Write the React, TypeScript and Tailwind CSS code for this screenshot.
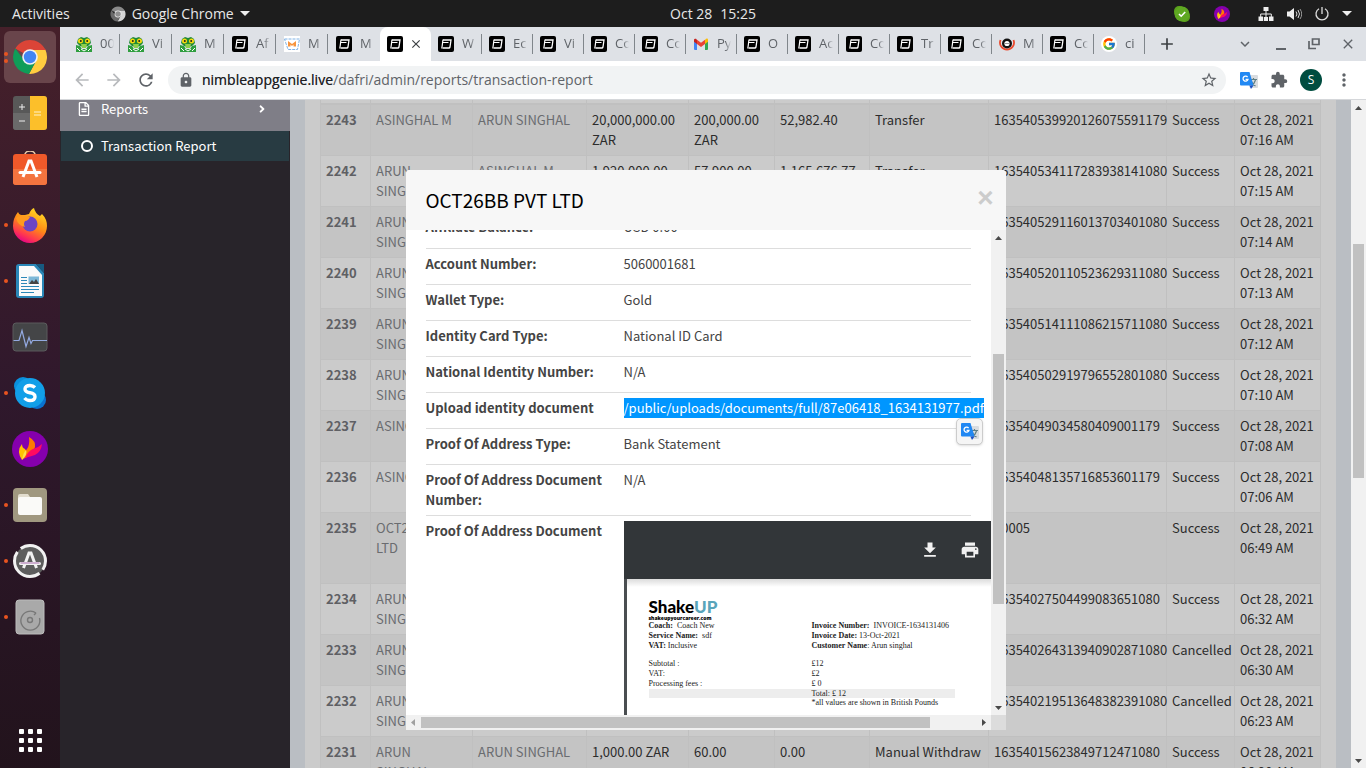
import React from 'react';
import {
  MdAdd, MdArrowBack, MdArrowForward, MdClose, MdExpandMore, MdExtension, MdFileDownload,
  MdLock, MdMoreVert, MdPrint, MdRefresh, MdStarBorder,
} from 'react-icons/md';
import { FaAngleRight, FaRegFileAlt } from 'react-icons/fa';
import { FcGoogle } from 'react-icons/fc';

/* ---------- small icons ---------- */

function FrogIcon() {
  return (
    <svg viewBox="0 0 16 16" className="size-4 shrink-0">
      <path d="M0 9l4 1 2 3 4 0 2-3 4-1v7H0z" fill="#2f9e3f" />
      <path d="M2 3l3-2 3 1 3-1 3 2 1 4-3 3-4 1-4-1-3-3z" fill="#1f8a35" />
      <path d="M5 8h6l-1 4H6z" fill="#8ecf4a" />
      <path d="M1 12l3 3M15 12l-3 3M5 13l3 2 3-2" stroke="#fff" strokeWidth="1" fill="none" />
      <circle cx="4.5" cy="5" r="2.5" fill="#f6d90e" />
      <circle cx="11.5" cy="5" r="2.5" fill="#f6d90e" />
      <circle cx="4.8" cy="5" r="1" fill="#222" />
      <circle cx="11.2" cy="5" r="1" fill="#222" />
    </svg>
  );
}

function DafriIcon() {
  return (
    <svg viewBox="0 0 16 16" className="size-4 shrink-0">
      <rect width="16" height="16" rx="2" fill="#000" />
      <path d="M5 4H13L12 11Q11.800 12 10.800 12H4.500" fill="none" stroke="#fff" strokeWidth="1.300" />
      <path d="M5 3.500L3.800 12.500" fill="none" stroke="#fff" strokeWidth="1.200" />
      <path d="M4.500 6.500H10.500" fill="none" stroke="#fff" strokeWidth="1" />
    </svg>
  );
}

function MoodleIcon() {
  return (
    <svg viewBox="0 0 16 16" className="size-4 shrink-0">
      <rect width="16" height="16" fill="#fff" />
      <path d="M.5 3h15l-2 10.500h-9.500z" fill="#fff" stroke="#7fb2e5" strokeWidth="1" strokeDasharray="3 1" />
      <path d="M4 10.500V5l4 3 4-3v5.500H9.500V8.500L8 10l-1.500-1.500v2z" fill="#f7933c" />
    </svg>
  );
}

function GmailIcon() {
  return (
    <svg viewBox="0 0 16 16" className="size-4 shrink-0">
      <path d="M1 4.500v8.500q0 1 1 1h2V7z" fill="#4285f4" />
      <path d="M15 4.500v8.500q0 1-1 1h-2V7z" fill="#34a853" />
      <path d="M12 3.700V8l3-2.200V4q0-2-2-1.200z" fill="#fbbc04" />
      <path d="M4 3.700l4 3 4-3V8l-4 3-4-3z" fill="#ea4335" />
      <path d="M1 4v1.800L4 8V3.700L3 2.800Q1 2.200 1 4z" fill="#c5221f" />
    </svg>
  );
}

function RingIcon() {
  return (
    <svg viewBox="0 0 16 16" className="size-4 shrink-0">
      <path d="M1.500 4a7 7 0 1 0 13 0" fill="none" stroke="#ea4a2e" strokeWidth="1.800" />
      <circle cx="8" cy="7.500" r="3.800" fill="#fff" stroke="#111" strokeWidth="2.400" />
      <path d="M6 7.500h4" stroke="#999" strokeWidth="1" />
    </svg>
  );
}

function GoogleTabIcon() {
  return (
    <span className="flex size-4 shrink-0 items-center justify-center rounded-full bg-white">
      <FcGoogle className="size-3.5" />
    </span>
  );
}

function TranslateIcon() {
  return (
    <svg viewBox="0 0 20 20" className="size-5 shrink-0">
      <path d="M7 5h12q1 0 1 1v11q0 1-1 1h-7z" fill="#d9dce0" />
      <path d="M12 9.500h7M15.500 8v1.500M17.500 10q-1 3.500-4 5.500M13.500 11.500q1 3 4 4.500" fill="none" stroke="#5f7f84" strokeWidth="1.200" />
      <path d="M3 2h8.500l4 13.500H3q-1 0-1-1V3q0-1 1-1z" fill="#2188f3" />
      <path d="M11.500 15.500h4l-2.500 3.500z" fill="#1a4fc4" />
      <path d="M9.600 7.200A2.500 2.500 0 1 0 10 9.300H7.600" fill="none" stroke="#fff" strokeWidth="1.300" />
    </svg>
  );
}

function FlameIcon({ className }: { className: string }) {
  return (
    <svg viewBox="0 0 36 36" className={className}>
      <circle cx="18" cy="18" r="18" fill="#8500ad" />
      <path d="M10 29Q4 20 10 13q0 4 3 5 4 4-3 11z" fill="#ffc400" />
      <path d="M11 28Q12 21 15 18q3-4 2-12 7 4 6 10-2 8-12 12z" fill="#ff7a00" />
      <path d="M13 27q3-7 8-9 5-1 9-5-1 8-7 11-3 1-10 3z" fill="#ff0a60" />
      <path d="M10 29q1-7 4-10 2 4-4 10z" fill="#ffe04a" />
    </svg>
  );
}

/* ---------- dock icons ---------- */

const dockIcon = 'size-9';

function ChromeIcon({ className = dockIcon, mono = false }: { className?: string; mono?: boolean }) {
  const c = mono ? ['#8a8a8a', '#d5d5d5', '#6a6a6a', '#8f8f8f'] : ['#db4437', '#ffcd40', '#0f9d58', '#4285f4'];
  return (
    <svg viewBox="0 0 36 36" className={className}>
      <path d="M18 18L3.300 9.500A17 17 0 0 1 32.700 9.500L34 11H18z" fill={c[0]} />
      <path d="M18 11h15.500A17 17 0 0 1 17 35l7-13z" fill={c[1]} />
      <path d="M3.300 9.500A17 17 0 0 0 17 35l7-13-12-1z" fill={c[2]} />
      <circle cx="18" cy="18" r="7.800" fill="#f1f1f1" />
      <circle cx="18" cy="18" r="6.200" fill={c[3]} />
    </svg>
  );
}

function CalculatorIcon() {
  return (
    <svg viewBox="0 0 36 36" className={dockIcon}>
      <rect x="1" y="1" width="34" height="34" rx="3" fill="#585858" />
      <path d="M1 18h17v17H4q-3 0-3-3z" fill="#6a6a6a" />
      <path d="M18 1h14q3 0 3 3v28q0 3-3 3H18z" fill="#fcbf2a" />
      <path d="M7 12h6M10 9v6M7 26h6" stroke="#eee" strokeWidth="1" />
      <path d="M22 17h7M22 20h7" stroke="#fff2cc" strokeWidth="1" />
    </svg>
  );
}

function SoftwareIcon() {
  return (
    <svg viewBox="0 0 36 36" className={dockIcon}>
      <path d="M13 5V3q1-3 5-3t5 3v2" fill="none" stroke="#e8c9a8" strokeWidth="1.500" />
      <rect x="1" y="3" width="34" height="31" rx="3" fill="#f0592a" />
      <path d="M1 18h34v13q0 3-3 3H4q-3 0-3-3z" fill="#f4743f" />
      <path d="M11 26l6-16h2l6 16" fill="none" stroke="#fff" strokeWidth="3" />
      <path d="M8 21.500h20" stroke="#fff" strokeWidth="3" strokeLinecap="round" />
    </svg>
  );
}

function FirefoxIcon() {
  return (
    <svg viewBox="0 0 36 36" className={dockIcon}>
      <defs>
        <linearGradient id="fx" x1="0.800" y1="0" x2="0.300" y2="1">
          <stop offset="0" stopColor="#ffe226" />
          <stop offset="0.500" stopColor="#ff8a16" />
          <stop offset="0.800" stopColor="#ff3650" />
          <stop offset="1" stopColor="#e3008a" />
        </linearGradient>
      </defs>
      <path d="M6 5q1 3 3 3h4l4-1q2-5 5-6 1 5 6 8l2-2q5 5 5 12A17 17 0 0 1 1 19Q1 11 6 5z" fill="url(#fx)" />
      <circle cx="18" cy="17" r="7.500" fill="#6b45c4" />
      <path d="M4 11q4-4 8-2l6 1q-2 4-5 4-2 3 0 6-7-1-9-9z" fill="#ff9a1f" />
    </svg>
  );
}

function WriterIcon() {
  return (
    <svg viewBox="0 0 36 36" className={dockIcon}>
      <path d="M7 1h17l8 9v22q0 3-3 3H7q-3 0-3-3V4q0-3 3-3z" fill="#2a87b8" />
      <path d="M7 3h15l8 9v21H7z" fill="#fafafa" />
      <path d="M24 1h8v9z" fill="#175a80" />
      <path d="M9 14.500h6M9 17.500h6M9 20.500h6M9 23.500h18M9 26.500h18M9 29.500h13" stroke="#2a87b8" strokeWidth="1.200" />
      <rect x="16.500" y="13.500" width="10.500" height="7.500" fill="#7db8d8" />
      <path d="M17 21l3-4 2 2 2-3 3 5z" fill="#444" />
    </svg>
  );
}

function MonitorIcon() {
  return (
    <svg viewBox="0 0 36 36" className={dockIcon}>
      <rect x="1" y="4" width="34" height="28" rx="3" fill="#444547" stroke="#5b5b5d" />
      <path d="M1.500 21.500H7l3-10 4 16 3-9 2 6 1.500-3H35" fill="none" stroke="#93a9e0" strokeWidth="1.200" />
    </svg>
  );
}

function SkypeIcon() {
  return (
    <svg viewBox="0 0 36 36" className={dockIcon}>
      <circle cx="11" cy="11" r="9" fill="#0a8fdc" />
      <circle cx="25" cy="25" r="9" fill="#0a72cf" />
      <circle cx="18" cy="18" r="15" fill="#129fe8" />
      <path d="M23 12.500q-2-2-5-2-5 0-5 3.500 0 3 5 3.800 5 .8 5 4-.2 3.700-5 3.700-3.500 0-5.500-2.500" fill="none" stroke="#fff" strokeWidth="3.400" />
    </svg>
  );
}

function FilesIcon() {
  return (
    <svg viewBox="0 0 36 36" className={dockIcon}>
      <rect x="1" y="1" width="34" height="34" rx="4" fill="#a09880" />
      <path d="M6 9q0-2 2-2h8l2 3h10v6H6z" fill="#e2ddcf" />
      <rect x="6" y="10" width="24" height="18" rx="2" fill="#fafaf8" />
    </svg>
  );
}

function UpdaterIcon() {
  return (
    <svg viewBox="0 0 36 36" className={dockIcon}>
      <circle cx="18" cy="18" r="15.500" fill="#5d5d5d" stroke="#f2f2f2" strokeWidth="3" strokeDasharray="44 4.700" strokeDashoffset="-14" />
      <path d="M11.500 25l5.500-15h2l5.500 15" fill="none" stroke="#f2f2f2" strokeWidth="3" />
      <path d="M8.500 20.500h19" stroke="#f2f2f2" strokeWidth="3" strokeLinecap="round" />
      <path d="M8.500 20h19" stroke="#a86bad" strokeWidth="1" />
    </svg>
  );
}

function DiskIcon() {
  return (
    <svg viewBox="0 0 36 36" className={dockIcon}>
      <rect x="4" y="1" width="28" height="34" rx="3" fill="#a9a9a9" stroke="#bcbcbc" />
      <path d="M24 14a9.500 9.500 0 1 0 3.500 5M24 14l-2 2" fill="none" stroke="#787878" strokeWidth="1.400" />
      <circle cx="18" cy="21" r="2.500" fill="none" stroke="#787878" strokeWidth="1.400" />
    </svg>
  );
}

const dock: { name: string; icon: React.ReactNode; dots: number; active?: boolean }[] = [
  { name: 'Google Chrome', icon: <ChromeIcon />, dots: 2, active: true },
  { name: 'Calculator', icon: <CalculatorIcon />, dots: 0 },
  { name: 'Ubuntu Software', icon: <SoftwareIcon />, dots: 0 },
  { name: 'Firefox', icon: <FirefoxIcon />, dots: 1 },
  { name: 'LibreOffice Writer', icon: <WriterIcon />, dots: 1 },
  { name: 'System Monitor', icon: <MonitorIcon />, dots: 0 },
  { name: 'Skype', icon: <SkypeIcon />, dots: 1 },
  { name: 'Flameshot', icon: <FlameIcon className={dockIcon} />, dots: 0 },
  { name: 'Files', icon: <FilesIcon />, dots: 1 },
  { name: 'Software Updater', icon: <UpdaterIcon />, dots: 1 },
  { name: 'Disk', icon: <DiskIcon />, dots: 1 },
];

/* ---------- desktop shell ---------- */

function TopBar() {
  return (
    <header className="grid h-[27px] shrink-0 grid-cols-[1fr_auto_1fr] items-center bg-[#1d1d1d] px-3 text-sm text-[#e8e8e8]">
      <div className="flex items-center">
        <button type="button">Activities</button>
        <button type="button" className="ml-10 flex items-center gap-1.5">
          <ChromeIcon className="size-4" mono />
          Google Chrome
          <svg viewBox="0 0 10 5" className="h-[5px] w-2.5"><path d="M0 0h10L5 5z" fill="#eee" /></svg>
        </button>
      </div>
      <button type="button" className="flex gap-2 pl-[60px]"><span>Oct 28</span><span>15:25</span></button>
      <div className="flex items-center justify-end gap-3">
        <svg viewBox="0 0 16 16" className="mr-3 size-4">
          <rect width="11" height="11" rx="5" fill="#5aa01c" /><rect x="5" y="5" width="11" height="11" rx="5" fill="#5aa01c" />
          <circle cx="8" cy="8" r="7.500" fill="#5fa822" /><path d="M5 8l2.200 2.200L11.200 6" fill="none" stroke="#fff" strokeWidth="1.600" />
        </svg>
        <FlameIcon className="mr-4 size-4" />
        <svg viewBox="0 0 16 16" className="size-4">
          <path d="M5.500 1h5v4h-5zM.5 10.500h4.500V15H.5zM11 10.500h4.500V15H11zM5.800 11h4.200v4H5.800z" fill="#eee" />
          <path d="M8 5v6M2.700 11V8h10.600v3" fill="none" stroke="#eee" />
        </svg>
        <svg viewBox="0 0 16 16" className="size-4">
          <path d="M1 5.500h2.500L8 2v12l-4.500-3.500H1z" fill="#eee" />
          <path d="M10 5.500q2 2.500 0 5M12 4q3 4 0 8" fill="none" stroke="#ddd" />
          <path d="M14 3q3.500 5 0 10" fill="none" stroke="#999" />
        </svg>
        <svg viewBox="0 0 16 16" className="size-4">
          <path d="M5 2.700a6 6 0 1 0 6 0M8 1v7" fill="none" stroke="#ddd" strokeWidth="1.300" />
        </svg>
        <svg viewBox="0 0 10 5" className="mr-0.5 h-[5px] w-2.5"><path d="M0 0h10L5 5z" fill="#eee" /></svg>
      </div>
    </header>
  );
}

function Dock() {
  return (
    <nav aria-label="Dock" className="flex w-[60px] shrink-0 flex-col bg-linear-to-b from-[#46202a] via-[#2f182c] to-[#22131c] pt-0.5">
      {dock.map((d) => (
        <button key={d.name} type="button" aria-label={d.name} className="relative flex h-14 w-full shrink-0 items-center justify-center">
          <span className={d.active ? 'flex size-[52px] items-center justify-center rounded-md bg-[#69454b]' : 'flex size-[52px] items-center justify-center'}>
            {d.icon}
          </span>
          <span className="absolute inset-y-0 left-1 flex flex-col justify-center gap-[3px]">
            {Array.from({ length: d.dots }, (_, i) => <i key={i} className="size-1 rounded-full bg-[#e95420]" />)}
          </span>
        </button>
      ))}
      <button type="button" aria-label="Show Applications" className="mx-auto mt-auto mb-4 grid grid-cols-3 gap-1">
        {Array.from({ length: 9 }, (_, i) => <i key={i} className="size-[5px] rounded-[1px] bg-white" />)}
      </button>
    </nav>
  );
}

type Kind = 'frog' | 'dafri' | 'moodle' | 'gmail' | 'ring' | 'google';

const tabs: { kind: Kind; label: string; active?: boolean }[] = [
  { kind: 'frog', label: '00' }, { kind: 'frog', label: 'Vi' }, { kind: 'frog', label: 'M' },
  { kind: 'dafri', label: 'Af' }, { kind: 'moodle', label: 'M' }, { kind: 'dafri', label: 'M' },
  { kind: 'dafri', label: '', active: true },
  { kind: 'dafri', label: 'W' }, { kind: 'dafri', label: 'Ec' }, { kind: 'dafri', label: 'Vi' },
  { kind: 'dafri', label: 'Co' }, { kind: 'dafri', label: 'Co' }, { kind: 'gmail', label: 'Py' },
  { kind: 'dafri', label: 'O' }, { kind: 'dafri', label: 'Ac' }, { kind: 'dafri', label: 'Co' },
  { kind: 'dafri', label: 'Tr' }, { kind: 'dafri', label: 'Co' }, { kind: 'ring', label: 'M' },
  { kind: 'dafri', label: 'Co' }, { kind: 'google', label: 'ci' },
];

function Favicon({ kind }: { kind: Kind }) {
  switch (kind) {
    case 'frog': return <FrogIcon />;
    case 'moodle': return <MoodleIcon />;
    case 'gmail': return <GmailIcon />;
    case 'ring': return <RingIcon />;
    case 'google': return <GoogleTabIcon />;
    default: return <DafriIcon />;
  }
}

function TabStrip() {
  return (
    <div className="flex h-[34px] shrink-0 items-center bg-[#dee1e6] pl-2 text-[#5f6368]">
      {tabs.map((t, i) => {
        if (t.active) {
          return (
            <div key={i} className="flex h-full w-[51px] shrink-0 items-center gap-1.5 rounded-t-lg bg-white pl-[7px]">
              <Favicon kind={t.kind} />
              <button type="button" aria-label="Close tab"><MdClose className="size-3.5 text-[#3c4043]" /></button>
            </div>
          );
        }
        const last = i === 5;
        return (
          <a
            key={i}
            href="#tab"
            className={i < 6
              ? 'flex h-5 w-[52px] shrink-0 items-center gap-2 pl-2'
              : 'flex h-5 w-[51px] shrink-0 items-center gap-2 pl-[7px]'}
          >
            <Favicon kind={t.kind} />
            <span className="-mr-2 w-3.5 overflow-hidden text-[13px] whitespace-nowrap mask-r-from-60%">{t.label}</span>
            <i className={last ? 'hidden' : 'ml-auto h-5 w-px bg-[#80868b]'} />
          </a>
        );
      })}
      <button type="button" aria-label="New tab" className="ml-3"><MdAdd className="size-5 text-[#3c4043]" /></button>
      <div className="ml-auto flex items-center gap-5 pr-2.5">
        <button type="button" aria-label="Search tabs"><MdExpandMore className="size-[18px]" /></button>
        <button type="button" aria-label="Minimise" className="flex h-3 w-3.5 items-end justify-center"><i className="h-0.5 w-2.5 bg-[#5f6368]" /></button>
        <button type="button" aria-label="Restore">
          <svg viewBox="0 0 12 12" className="size-3"><path d="M4.500 1h6.500v5.500H4.500zM1 3v7.500h7" fill="none" stroke="#5f6368" strokeWidth="1.700" /></svg>
        </button>
        <button type="button" aria-label="Close"><MdClose className="size-4" /></button>
      </div>
    </div>
  );
}

function Toolbar() {
  return (
    <div className="flex h-[39px] shrink-0 items-center border-b border-[#d5d7da] bg-white px-3 text-[#5f6368]">
      <div className="flex gap-3">
        <button type="button" aria-label="Back"><MdArrowBack className="size-5 text-[#b8babd]" /></button>
        <button type="button" aria-label="Forward"><MdArrowForward className="size-5 text-[#b8babd]" /></button>
        <button type="button" aria-label="Reload"><MdRefresh className="size-5" /></button>
      </div>
      <div className="ml-3 flex h-7 flex-1 items-center rounded-full bg-[#f1f3f4] pr-2 pl-2.5">
        <MdLock className="size-4" />
        <label htmlFor="url" className="sr-only">Address</label>
        <div className="relative ml-2 h-5 flex-1 text-sm leading-5">
          <input id="url" readOnly value="nimbleappgenie.live/dafri/admin/reports/transaction-report" className="block h-5 w-full bg-transparent text-[#5f6368] outline-none" />
          <span aria-hidden="true" className="pointer-events-none absolute top-0 left-0 text-[#202124]">nimbleappgenie.live</span>
        </div>
        <button type="button" aria-label="Bookmark"><MdStarBorder className="size-[18px]" /></button>
      </div>
      <div className="ml-3 flex items-center gap-3">
        <button type="button" aria-label="Translate"><TranslateIcon /></button>
        <button type="button" aria-label="Extensions"><MdExtension className="size-[18px]" /></button>
        <button type="button" aria-label="Profile" className="flex size-[22px] items-center justify-center rounded-full bg-[#004d40] text-xs text-white">S</button>
        <button type="button" aria-label="Menu"><MdMoreVert className="size-5" /></button>
      </div>
    </div>
  );
}

/* ---------- report page ---------- */

function Sidebar() {
  return (
    <aside className="w-[230px] shrink-0 bg-[#28242a] text-white">
      <a href="#reports" className="flex h-[31px] items-start bg-[#7f7e87] pl-[18px]">
        <FaRegFileAlt className="mt-0.5 size-3.5 w-3" />
        <span className="ml-[11px] leading-[18px]">Reports</span>
        <FaAngleRight className="mt-[3px] mr-[22px] ml-auto size-3" />
      </a>
      <a href="#transactions" className="mx-px flex h-[30px] items-center bg-[#283b42] pl-5">
        <i className="size-3 rounded-full border-2 border-white" />
        <span className="ml-2">Transaction Report</span>
      </a>
    </aside>
  );
}

type Row = [id: string, from: string, to: string, amount: string, fee: string, balance: string, type: string, txn: string, status: string, time: string];

const rows: Row[] = [
  ['2243', 'ASINGHAL M', 'ARUN SINGHAL', '20,000,000.00 ZAR', '200,000.00 ZAR', '52,982.40', 'Transfer', '163540539920126075591179', 'Success', '07:16 AM'],
  ['2242', 'ARUN SINGHAL', 'ASINGHAL M', '1,920,000.00 ZAR', '57,900.00 ZAR', '1,165,676.77', 'Transfer', '163540534117283938141080', 'Success', '07:15 AM'],
  ['2241', 'ARUN SINGHAL', '', '', '', '', '', '163540529116013703401080', 'Success', '07:14 AM'],
  ['2240', 'ARUN SINGHAL', '', '', '', '', '', '163540520110523629311080', 'Success', '07:13 AM'],
  ['2239', 'ARUN SINGHAL', '', '', '', '', '', '163540514111086215711080', 'Success', '07:12 AM'],
  ['2238', 'ARUN SINGHAL', '', '', '', '', '', '163540502919796552801080', 'Success', '07:10 AM'],
  ['2237', 'ASINGHAL M', '', '', '', '', '', '16354049034580409001179', 'Success', '07:08 AM'],
  ['2236', 'ASINGHAL M', '', '', '', '', '', '16354048135716853601179', 'Success', '07:06 AM'],
  ['2235', 'OCT26BB PVT LTD', '', '', '', '', '', '10005', 'Success', '06:49 AM'],
  ['2234', 'ARUN SINGHAL', '', '', '', '', '', '16354027504499083651080', 'Success', '06:32 AM'],
  ['2233', 'ARUN SINGHAL', '', '', '', '', '', '163540264313940902871080', 'Cancelled', '06:30 AM'],
  ['2232', 'ARUN SINGHAL', '', '', '', '', '', '163540219513648382391080', 'Cancelled', '06:23 AM'],
  ['2231', 'ARUN SINGHAL', 'ARUN SINGHAL', '1,000.00 ZAR', '60.00', '0.00', 'Manual Withdraw', '16354015623849712471080', 'Success', '06:20 AM'],
];

const cell = 'border border-[#c0c0c0] py-[5px] pr-[7px] pl-[5px] align-top font-normal';
const tightCell = 'border border-[#c0c0c0] py-[5px] pl-[5px] align-top font-normal';

function ReportTable() {
  return (
    <table className="w-full table-fixed border-collapse text-left leading-5 text-[#2c2c2c]">
      <colgroup>
        <col className="w-[5%]" /><col className="w-[10.200%]" /><col className="w-[11.400%]" />
        <col className="w-[10.200%]" /><col className="w-[8.600%]" /><col className="w-[9.500%]" />
        <col className="w-[11.900%]" /><col className="w-[17.800%]" /><col className="w-[6.800%]" /><col />
      </colgroup>
      <tbody>
        <tr className="h-1">
          {rows[0].map((_, i) => <td key={i} className="border-x border-b-2 border-[#c0c0c0]" />)}
        </tr>
        {rows.map((r, i) => (
          <tr key={r[0]} className={`${r[0] === '2235' ? 'h-[71px]' : 'h-[51px]'} ${i % 2 === 0 ? 'bg-[#c4c4c4]' : 'bg-[#cbcbcb]'}`}>
            <th scope="row" className="border border-[#c0c0c0] py-[5px] pl-[5px] align-top font-bold text-[#5f6064]">{r[0]}</th>
            <td className={cell}><a href="#user" className="text-[#6a6c70]">{r[1]}</a></td>
            <td className={cell}><a href="#user" className="text-[#6a6c70]">{r[2]}</a></td>
            <td className={cell}>{r[3]}</td>
            <td className={cell}>{r[4]}</td>
            <td className={cell}>{r[5]}</td>
            <td className={cell}>{r[6]}</td>
            <td className={tightCell}>{r[7]}</td>
            <td className={tightCell}>{r[8]}</td>
            <td className={tightCell}>Oct 28, 2021<br />{r[9]}</td>
          </tr>
        ))}
      </tbody>
    </table>
  );
}

function Arrow({ dir }: { dir: 'up' | 'down' | 'left' | 'right' }) {
  const d = { up: 'M4 10h7L7.500 6z', down: 'M4 6h7l-3.500 4z', left: 'M9 4v7L5 7.500z', right: 'M6 4v7l4-3.500z' }[dir];
  return <svg viewBox="0 0 15 15" className="size-[15px] shrink-0"><path d={d} fill={dir === 'left' ? '#a0a0a0' : '#4a4a4a'} /></svg>;
}

/* ---------- details dialog ---------- */

const details: [string, string][] = [
  ['Affiliate Balance:', 'USD 0.00'],
  ['Account Number:', '5060001681'],
  ['Wallet Type:', 'Gold'],
  ['Identity Card Type:', 'National ID Card'],
  ['National Identity Number:', 'N/A'],
  ['Upload identity document', '/public/uploads/documents/full/87e06418_1634131977.pdf'],
  ['Proof Of Address Type:', 'Bank Statement'],
  ['Proof Of Address Document Number:', 'N/A'],
];

function Invoice() {
  return (
    <div className="w-[450px]">
      <div className="flex h-[58px] items-center gap-5 bg-[#323639] pl-[296px] text-[#f1f1f1]">
        <button type="button" aria-label="Download"><MdFileDownload className="size-5" /></button>
        <button type="button" aria-label="Print"><MdPrint className="size-5" /></button>
      </div>
      <div className="h-[160px] border-l-[3px] border-[#4a4e51] bg-white bg-linear-to-b from-[#dcdcdc] to-white to-5% pt-5 pl-[22px] font-['Liberation_Serif',serif] text-[8px] leading-[10px] text-[#222]">
        <div className="h-[22px] text-black">
          <div className="flex h-[17px] items-center font-['Lato',sans-serif] text-[17px] font-black">
            Shake<span className="text-[#5aa5ba]">UP</span>
          </div>
          <div className="font-['Open_Sans',sans-serif] text-[5px] leading-[5px] font-extrabold">shakeupyourcareer.com</div>
        </div>
        <div className="grid w-[306px] grid-cols-[163px_1fr]">
          <p><b>Coach:</b>&nbsp; Coach New</p><p><b>Invoice Number:</b>&nbsp; INVOICE-1634131406</p>
          <p><b>Service Name:</b>&nbsp; sdf</p><p><b>Invoice Date:</b> 13-Oct-2021</p>
          <p><b>VAT:</b> Inclusive</p><p><b>Customer Name</b>: Arun singhal</p>
          <p className="mt-2">Subtotal :</p><p className="mt-2">£12</p>
          <p>VAT:</p><p>£2</p>
          <p>Processing fees :</p><p>£ 0</p>
          <p className="bg-[#ededed]" /><p className="bg-[#ededed] leading-[9px]">Total: £ 12</p>
          <p /><p>*all values are shown in British Pounds</p>
        </div>
      </div>
    </div>
  );
}

function DetailsDialog() {
  return (
    <div role="dialog" aria-labelledby="dialog-title" className="flex h-[560px] w-[600px] flex-col overflow-hidden rounded-t bg-white text-[#444]">
      <div className="flex h-[60px] shrink-0 items-center justify-between bg-[#f7f7f7] pr-3 pl-5">
        <h2 id="dialog-title" className="text-[19px] text-black">OCT26BB PVT LTD</h2>
        <button type="button" aria-label="Close" className="pb-1 font-['Liberation_Sans',sans-serif] text-[28px] leading-8 font-bold text-[#ccc]">×</button>
      </div>
      <div className="flex min-h-0 flex-1">
        <div className="flex min-w-0 flex-1 flex-col justify-start overflow-hidden pl-5">
          <table className="-mt-[18px] w-[545px] shrink-0 table-fixed border-collapse text-left leading-5">
            <colgroup><col className="w-[198px]" /><col /></colgroup>
            <tbody>
              {details.map(([k, v]) => (
                <tr key={k} className="h-9 border-b border-[#ddd]">
                  <th scope="row" className="py-[5px] pr-4 align-top font-bold">{k}</th>
                  <td className="py-[5px] align-top whitespace-nowrap">
                    {v.startsWith('/') ? (
                      <span className="relative block">
                        <span className="block w-max bg-[#0096ff] text-white">{v}</span>
                        <button type="button" aria-label="Translate selection" className="absolute top-5 -right-3 flex size-[27px] items-center justify-center rounded-[5px] border border-[#ccc] bg-[#f5f5f5] shadow-sm">
                          <TranslateIcon />
                        </button>
                      </span>
                    ) : v}
                  </td>
                </tr>
              ))}
              <tr>
                <th scope="row" className="py-[5px] align-top font-bold">Proof Of Address Document</th>
                <td className="pt-[5px] align-top"><Invoice /></td>
              </tr>
            </tbody>
          </table>
        </div>
        <div className="flex w-[15px] shrink-0 flex-col items-center bg-[#f1f1f1]">
          <Arrow dir="up" />
          <i className="mt-[109px] h-[250px] w-[11px] bg-[#c1c1c1]" />
          <span className="mt-auto"><Arrow dir="down" /></span>
        </div>
      </div>
      <div className="flex h-[15px] shrink-0 items-center bg-[#f1f1f1]">
        <Arrow dir="left" />
        <i className="h-[11px] w-[509px] bg-[#c1c1c1]" />
        <span className="ml-auto"><Arrow dir="right" /></span>
        <i className="size-[15px] bg-[#dcdcdc]" />
      </div>
    </div>
  );
}

export default function App() {
  return (
    <div className="flex h-screen w-full flex-col overflow-hidden font-['Open_Sans','Noto_Sans',sans-serif]">
      <TopBar />
      <div className="flex min-h-0 flex-1">
        <Dock />
        <div className="flex min-w-0 flex-1 flex-col">
          <TabStrip />
          <Toolbar />
          <div className="flex min-h-0 flex-1 font-['Noto_Sans_CJK_SC',sans-serif] text-[13px]">
            <div className="relative flex min-w-0 flex-1">
              <Sidebar />
              <main className="min-w-0 flex-1 overflow-hidden bg-[#babec3] px-[15px]">
                <div className="min-h-full bg-[#cbcbcb] px-[15px]"><ReportTable /></div>
              </main>
              <div className="absolute inset-0 flex items-start justify-center pt-[70px]"><DetailsDialog /></div>
            </div>
            <div className="flex w-[15px] shrink-0 flex-col items-center bg-[#f1f1f1]">
              <Arrow dir="up" />
              <i className="mt-[129px] h-[234px] w-[11px] bg-[#c1c1c1]" />
              <span className="mt-auto"><Arrow dir="down" /></span>
            </div>
          </div>
        </div>
      </div>
    </div>
  );
}
